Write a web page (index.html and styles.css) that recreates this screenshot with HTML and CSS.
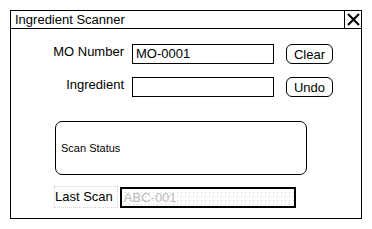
FILE: index.html
```html
<!DOCTYPE html>
<html lang="en">
<head>
  <meta charset="UTF-8">
  <title>Ingredient Scanner</title>
  <link rel="stylesheet" href="styles.css">
</head>
<body>

<div class="window">
  <div class="title-bar">
    <span class="title">Ingredient Scanner</span>
    <div class="close-box">
      <svg width="15" height="15" viewBox="0 0 15 15">
        <path d="M2 2 L13 13 M13 2 L2 13" stroke="#000" stroke-width="2.2" fill="none"/>
      </svg>
    </div>
  </div>

  <div class="content">
    <div class="form-grid">
      <label class="field-label">MO Number</label>
      <div class="text-box">MO-0001</div>
      <button class="btn">Clear</button>

      <label class="field-label">Ingredient</label>
      <div class="text-box"></div>
      <button class="btn">Undo</button>
    </div>

    <div class="status-box">Scan Status</div>

    <div class="last-row">
      <span class="last-label">Last Scan</span>
      <div class="last-box">ABC-001</div>
    </div>
  </div>
</div>

</body>
</html>
```

FILE: styles.css
```css
body {
  margin: 0;
  padding: 10px;
  font-family: "Liberation Sans", Arial, sans-serif;
  font-size: 13px;
  color: #000;
  background: #fff;
}

.window {
  width: 350px;
  height: 207px;
  border: 1px solid #000;
  display: flex;
  flex-direction: column;
}

.title-bar {
  height: 17px;
  border-bottom: 1px solid #000;
  display: flex;
  align-items: center;
  justify-content: space-between;
}

.title {
  padding-left: 4px;
  line-height: 17px;
}

.close-box {
  width: 16px;
  height: 17px;
  border-left: 1px solid #000;
  display: flex;
  align-items: center;
  justify-content: center;
}

.content {
  padding-top: 15px;
}

.form-grid {
  display: grid;
  grid-template-columns: 113px 142px 51px;
  grid-auto-rows: 20px;
  column-gap: 8px;
  row-gap: 13px;
}

.field-label {
  text-align: right;
  line-height: 16px;
}

.text-box {
  border: 1px solid #000;
  padding-left: 3px;
  line-height: 18px;
}

.btn {
  justify-self: end;
  width: 47px;
  height: 20px;
  font-family: inherit;
  font-size: 13px;
  background: #fff;
  color: #000;
  border: 1px solid #000;
  border-radius: 6px;
  padding: 0;
}

.status-box {
  margin: 24px 0 0 44px;
  width: 252px;
  height: 54px;
  box-sizing: border-box;
  border: 1px solid #000;
  border-radius: 7px;
  font-size: 11px;
  display: flex;
  align-items: center;
  padding-left: 5px;
}

.last-row {
  display: flex;
  align-items: center;
  margin: 11px 0 0 43px;
}

.last-label {
  border: 1px dotted #d4d4d4;
  padding: 2px 4px 3px 0;
}

.last-box {
  margin-left: 2px;
  width: 170px;
  height: 17px;
  border: 2px solid #000;
  color: #bbb;
  padding-left: 2px;
  line-height: 17px;
  background-color: #fff;
  background-image: linear-gradient(90deg, #fff 3px, transparent 3px), linear-gradient(#fff 3px, #ccc 3px);
  background-size: 4px 4px;
}
```
